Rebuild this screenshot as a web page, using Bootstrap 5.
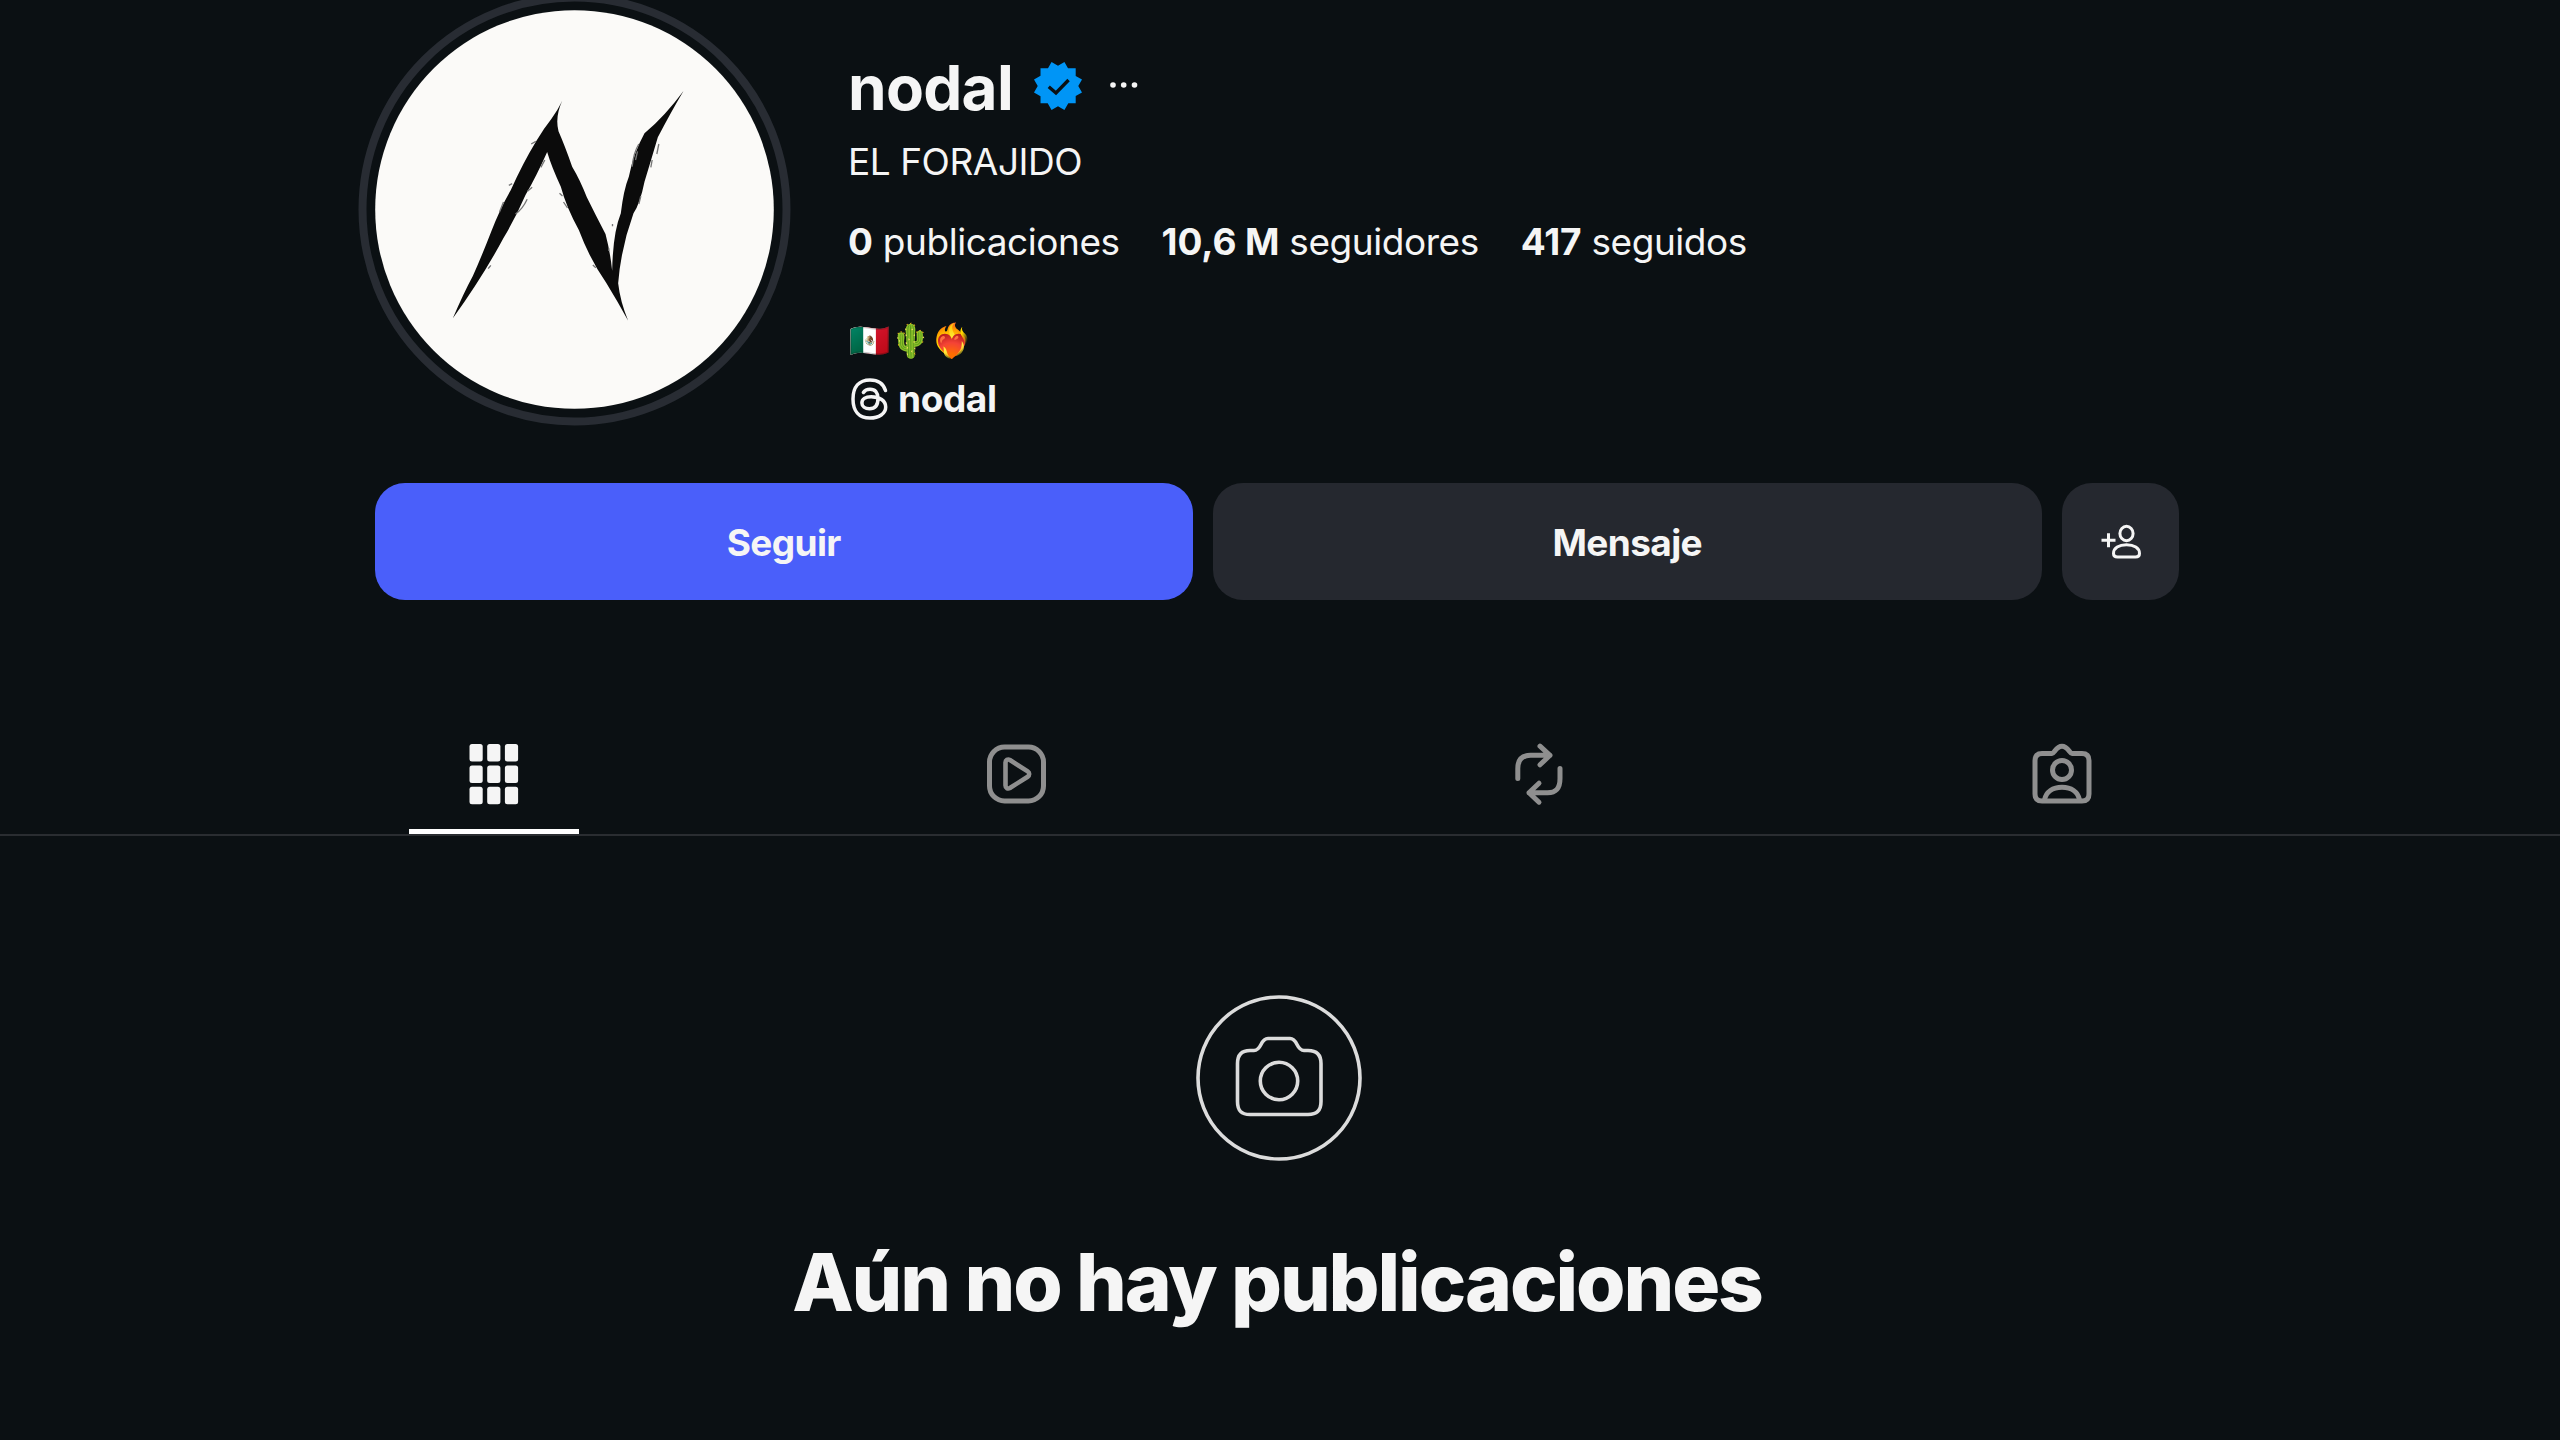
<!DOCTYPE html>
<html lang="es" data-bs-theme="dark">
<head>
<meta charset="utf-8">
<meta name="viewport" content="width=device-width, initial-scale=1">
<title>nodal</title>
<link href="https://cdn.jsdelivr.net/npm/bootstrap@5.3.0/dist/css/bootstrap.min.css" rel="stylesheet">
<style>
  body { background: #0b1013; color: #f5f5f5; font-family: Inter, "Liberation Sans", sans-serif; font-size: 37px; line-height: 46px; letter-spacing: -.45px; overflow: hidden; height: 1440px; }
  b, .semi { font-weight: 700; letter-spacing: -.1px; }
  svg { display: block; flex: none; overflow: visible; }
  .profile { padding: 10px 381px 0 375px; }
  .avatar { width: 399px; height: 399px; }
  .info { margin-left: 74px; padding-top: 42px; }
  .username { font-size: 62px; line-height: 72px; font-weight: 700; letter-spacing: -.7px; margin: 0; color: #f5f5f5; }
  .verified { margin-left: 21px; margin-top: -4px; }
  .dots { margin-left: 27px; margin-top: -6px; }
  .fullname { margin-top: 15px; }
  .stats { margin-top: 34px; gap: 42px; }
  .bio { margin-top: 52px; font-size: 33px; letter-spacing: 0; padding-left: 1px; }
  .threads { margin-top: 13px; gap: 10px; padding-left: 3px; letter-spacing: -.4px; }
  .actions { margin-top: 61px; gap: 20.5px; }
  .actions .btn { height: 117px; border: 0; border-radius: 30px; font-size: 37px; line-height: 46px; padding: 3px 0 0; color: #f5f5f5; font-weight: 700; letter-spacing: -.6px; }
  .btn-follow, .btn-follow:hover { background: #4a5ffa; width: 817.5px; }
  .btn-dark2, .btn-dark2:hover { background: #25282f; }
  .actions .btn-add { width: 117px; padding: 0; }
  .tabs { margin-top: 110px; height: 126px; padding: 0 237px 0 233px; border-bottom: 2px solid #2a2d31; color: #8f8f8f; }
  .tabs .nav-link { flex: 1 1 0; height: 124px; padding: 34px 0 0; color: inherit; border-radius: 0; display: flex; flex-direction: column; align-items: center; }
  .tabs .nav-link.active { color: #f5f5f5; }
  .tab-line { width: 170px; height: 5px; background: #fff; margin-top: 25px; }
  .empty { padding-top: 158px; padding-right: 3px; }
  .empty h1 { margin: 72px 3px 0 0; font-size: 80px; line-height: 96px; font-weight: 800; letter-spacing: -2.1px; color: #f5f5f5; }
</style>
</head>
<body>
<main>
  <section class="profile">
    <header class="d-flex">
      <svg class="avatar" viewBox="0 0 399 399">
        <circle cx="199.500" cy="199.500" r="212" fill="none" stroke="#282c33" stroke-width="8"/>
        <circle cx="199.500" cy="199.500" r="199.300" fill="#fbfaf8"/>
        <g transform="translate(-25.5 -10) scale(.33333)" fill="#0b0b0b">
          <path d="M310 955Q342 880 370 828Q394 775 425 695Q452 625 484 570Q520 490 560 424Q582 386 606 356Q624 332 638 303Q616 350 627 394Q645 435 668 500Q692 540 712 592Q738 645 768 702Q782 755 788 812Q790 700 814 640Q822 570 838 530Q852 460 885 400Q945 350 1002 273Q965 335 925 412Q905 480 885 545Q872 610 852 640Q814 745 806 850Q812 905 836 962Q805 905 770 848Q722 780 688 690Q650 620 634 560Q606 500 593 456Q560 530 528 585Q500 650 462 714Q400 830 310 955Z"/>
          <path d="M545 432l14-8M478 556l10-5M450 636l12-30M533 598q-14 30-35 44M586 480l-12 22M548 562l-14 12M630 580l9 8M642 606l12 18M730 795l9 8M848 500q4-42 20-68M858 480l6-26M928 432l-6 30M908 480l-4 22M868 612l6-24M789 672v7M778 745v8M424 796l-8 10" fill="none" stroke="#777" stroke-width="4"/>
        </g>
      </svg>
      <div class="info">
        <div class="d-flex align-items-center">
          <h2 class="username">nodal</h2>
          <svg class="verified" width="48" height="48" viewBox="0 0 40 40"><path d="M19.998 3.094 14.638 0l-2.972 5.150H5.432v6.354L0 14.640 3.094 20 0 25.359l5.432 3.137v5.905h5.975L14.638 40l5.360-3.094L25.358 40l3.232-5.600h6.162v-6.010L40 25.359 36.905 20 40 14.641l-5.248-3.030v-6.460h-6.419L25.358 0l-5.360 3.094Z" fill="#0095f6"/><path d="M12.300 20.600l6 5.200 10.500-10.800" fill="none" stroke="#0b1013" stroke-width="2.800"/></svg>
          <svg class="dots" width="29" height="8" viewBox="0 0 29 8" fill="#f5f5f5"><circle cx="4" cy="4" r="2.800"/><circle cx="14.700" cy="4" r="2.800"/><circle cx="25.500" cy="4" r="2.800"/></svg>
        </div>
        <div class="fullname">EL FORAJIDO</div>
        <div class="stats d-flex text-nowrap">
          <span><b>0</b> publicaciones</span>
          <span><b>10,6 M</b> seguidores</span>
          <span><b>417</b> seguidos</span>
        </div>
        <div class="bio">🇲🇽🌵❤️‍🔥</div>
        <div class="threads d-flex align-items-center fw-bold">
          <svg width="37" height="42" viewBox="0 0 37 42" fill="none" stroke="#f5f5f5" stroke-width="3.500" stroke-linecap="round" stroke-linejoin="round"><path d="M34.500 12.500C32.300 5.300 26.800 1.900 19 1.900 8 1.900 2 9 2 21s6 19.100 17 19.100c9 0 15.700-4.600 15.700-11.100 0-6.200-6-10.300-14.500-10.300-6 0-9.300 2.400-9.300 6.200 0 3.500 3.200 5.800 7.600 5.800 5.500 0 8.500-3.500 8.500-10.200 0-6.200-2.900-9.200-7.900-9.200-3 0-5.300 1-6.700 3.200"/></svg>
          <span>nodal</span>
        </div>
      </div>
    </header>
    <div class="actions d-flex">
      <button type="button" class="btn btn-follow">Seguir</button>
      <button type="button" class="btn btn-dark2 flex-grow-1">Mensaje</button>
      <button type="button" class="btn btn-dark2 btn-add d-flex align-items-center justify-content-center" aria-label="Añadir">
        <svg width="40" height="34" viewBox="0 0 40 34" fill="none" stroke="#f5f5f5" stroke-width="3"><ellipse cx="25.500" cy="8.500" rx="6.600" ry="7.200"/><path d="M12.500 28.500C12.500 23 18 19.800 25.500 19.800S38.500 23 38.500 28.500c0 2.500-1.500 3.500-4 3.500h-18c-2.500 0-4-1-4-3.500Z"/><path d="M.5 15.200h14M7.500 8.200v14"/></svg>
      </button>
    </div>
  </section>

  <nav class="tabs nav">
    <a class="nav-link active" href="#" aria-label="Publicaciones">
      <svg width="60" height="60" viewBox="0 0 60 60" fill="currentColor"><g id="row"><rect x="5.500" y="0" width="13.200" height="17.500" rx="2.500"/><rect x="23.200" y="0" width="13.200" height="17.500" rx="2.500"/><rect x="40.900" y="0" width="13.200" height="17.500" rx="2.500"/></g><use href="#row" y="21.400"/><use href="#row" y="42.800"/></svg>
      <span class="tab-line"></span>
    </a>
    <a class="nav-link" href="#" aria-label="Reels">
      <svg width="60" height="60" viewBox="0 0 60 60" fill="none" stroke="currentColor" stroke-width="5" stroke-linejoin="round"><rect x="2.500" y="3" width="54" height="54" rx="15"/><path d="M18.500 18.500v23c0 2.500 2.300 3.700 4.400 2.500l17.800-11.300c2-1.300 2-4 0-5.300L22.900 16c-2.100-1.200-4.400 0-4.400 2.500Z" stroke-width="4.600"/></svg>
    </a>
    <a class="nav-link" href="#" aria-label="Republicaciones">
      <svg width="60" height="60" viewBox="0 0 60 60" fill="none" stroke="currentColor" stroke-width="5" stroke-linecap="round" stroke-linejoin="round"><path d="M8.800 34.500V24.500C8.800 15.500 13 11.300 21.500 11.300H41M31 2.200 41 11.300 31 20.800"/><path d="M51 24.500V34.500C51 44.500 47 48.700 38.500 48.700H20M30 39.200 20 48.700 30 58.200"/><path d="M36 6.500 41 11.300 36 16.200ZM25 44 20 48.700 25 53.500Z" fill="currentColor" stroke-width="2"/></svg>
    </a>
    <a class="nav-link" href="#" aria-label="Etiquetadas">
      <svg width="60" height="60" viewBox="0 0 60 60" fill="none" stroke="currentColor" stroke-width="5" stroke-linejoin="round"><path d="M10 9.500H20C22.500 9.500 24 2.300 30 2.300S37.500 9.500 40 9.500H50C54.500 9.500 57 12 57 16.500V50C57 54.500 54.500 57 50 57H10C5.500 57 3 54.500 3 50V16.500C3 12 5.500 9.500 10 9.500Z"/><circle cx="30" cy="26" r="9.500"/><path d="M12.500 56C14 47.500 21 43.300 30 43.300S46 47.500 47.500 56"/></svg>
    </a>
  </nav>

  <section class="empty d-flex flex-column align-items-center">
    <svg width="166" height="168" viewBox="0 0 166 168" fill="none" stroke="#dcdcdc" stroke-width="3.600"><circle cx="83" cy="84" r="81"/><path d="M54 56.500H58C66 56.500 64 44.500 72 44.500H94C102 44.500 100 56.500 108 56.500H112C121 56.500 125 61.500 125 69.500V107.500C125 116.500 121 120.500 112 120.500H54C45 120.500 41.500 116.500 41.500 107.500V69.500C41.500 61.500 45 56.500 54 56.500Z"/><circle cx="83" cy="87" r="18.700"/></svg>
    <h1>Aún no hay publicaciones</h1>
  </section>
</main>
<script src="https://cdn.jsdelivr.net/npm/bootstrap@5.3.0/dist/js/bootstrap.bundle.min.js"></script>
</body>
</html>
